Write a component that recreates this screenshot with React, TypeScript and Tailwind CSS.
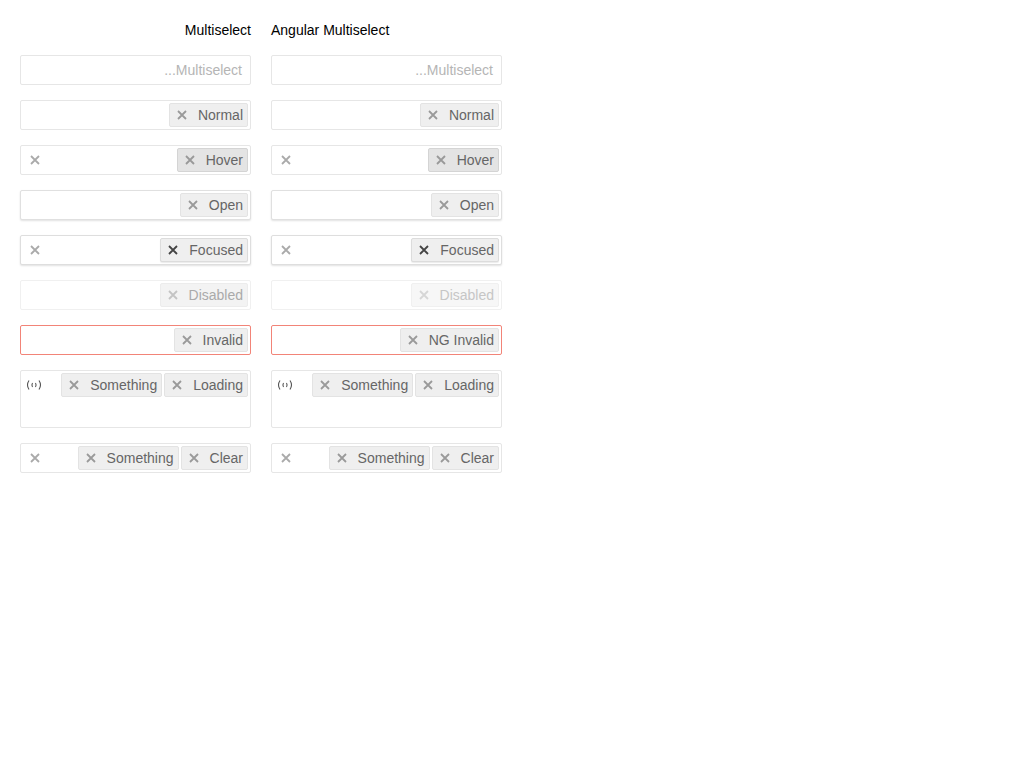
import React from "react";

type TagKind = "normal" | "hover" | "focused" | "disabled" | "disabledLight";
type BoxState = "normal" | "open" | "focused" | "disabled" | "invalid";

type Row = {
  tags: { label: string; kind?: TagKind }[];
  state?: BoxState;
  clear?: boolean;
  loading?: boolean;
  tall?: boolean;
  placeholder?: string;
};

const XIcon = ({ className }: { className: string }) => (
  <svg width="10" height="10" viewBox="0 0 10 10" className={`shrink-0 ${className}`}>
    <path d="M1 1L9 9M9 1L1 9" stroke="currentColor" strokeWidth="1.8" />
  </svg>
);

// little "((·))" spinner glyph
const LoadingIcon = () => (
  <svg width="18" height="12" viewBox="0 0 18 12" className="shrink-0 text-[#555]">
    <path d="M4 1.5Q1 6 4 10.5" stroke="currentColor" strokeWidth="1.1" fill="none" />
    <path d="M14 1.5Q17 6 14 10.5" stroke="currentColor" strokeWidth="1.1" fill="none" />
    <path d="M7.5 4Q6.3 6 7.5 8" stroke="currentColor" strokeWidth="1.1" fill="none" />
    <path d="M10.5 4Q11.7 6 10.5 8" stroke="currentColor" strokeWidth="1.1" fill="none" />
  </svg>
);

const tagStyles: Record<TagKind, { box: string; x: string; text: string }> = {
  normal: { box: "bg-[#efefef] border-[#e3e3e3]", x: "text-[#9a9a9a]", text: "text-[#666]" },
  hover: { box: "bg-[#e4e4e4] border-[#d4d4d4]", x: "text-[#999]", text: "text-[#666]" },
  focused: {
    box: "bg-[#efefef] border-[#dcdcdc] shadow-[0_1px_1px_rgba(0,0,0,0.08)]",
    x: "text-[#444]",
    text: "text-[#666]",
  },
  disabled: { box: "bg-[#f3f3f3] border-[#ececec]", x: "text-[#c4c4c4]", text: "text-[#aaa]" },
  disabledLight: { box: "bg-[#f7f7f7] border-[#f0f0f0]", x: "text-[#d6d6d6]", text: "text-[#c6c6c6]" },
};

const boxStyles: Record<BoxState, string> = {
  normal: "border-[#e6e6e6]",
  open: "border-[#e0e0e0] shadow-[0_1px_2px_rgba(0,0,0,0.12)]",
  focused: "border-[#dedede] shadow-[0_1px_2px_rgba(0,0,0,0.12)]",
  disabled: "border-[#f0f0f0]",
  invalid: "border-[#f28478]",
};

const Tag = ({ label, kind = "normal" }: { label: string; kind?: TagKind }) => {
  const s = tagStyles[kind];
  return (
    <div className={`flex h-[24px] items-center gap-[11px] rounded-[2px] border pl-[7px] pr-[4px] ${s.box}`}>
      <XIcon className={s.x} />
      <span className={`text-[14px] leading-none ${s.text}`}>{label}</span>
    </div>
  );
};

const Box = ({ row }: { row: Row }) => {
  const state = row.state ?? "normal";
  return (
    <div
      className={`flex items-start rounded-[2px] border bg-white p-[2px] ${
        row.tall ? "h-[58px]" : "h-[30px]"
      } ${boxStyles[state]}`}
    >
      {row.clear && (
        <div className="flex h-[24px] w-[20px] shrink-0 items-center pl-[7px]">
          <XIcon className="text-[#aaa]" />
        </div>
      )}
      {row.loading && (
        <div className="flex h-[24px] shrink-0 items-center pl-[2px]">
          <LoadingIcon />
        </div>
      )}
      <div className="flex flex-1 justify-end gap-[2px]">
        {row.placeholder ? (
          <span className="flex h-[24px] items-center pr-[6px] text-[14px] text-[#b5b5b5]">{row.placeholder}</span>
        ) : (
          row.tags.map((t) => <Tag key={t.label} label={t.label} kind={t.kind} />)
        )}
      </div>
    </div>
  );
};

const makeRows = (angular: boolean): Row[] => [
  { tags: [], placeholder: "...Multiselect" },
  { tags: [{ label: "Normal" }] },
  { tags: [{ label: "Hover", kind: "hover" }], clear: true },
  { tags: [{ label: "Open" }], state: "open" },
  { tags: [{ label: "Focused", kind: "focused" }], clear: true, state: "focused" },
  { tags: [{ label: "Disabled", kind: angular ? "disabledLight" : "disabled" }], state: "disabled" },
  { tags: [{ label: angular ? "NG Invalid" : "Invalid" }], state: "invalid" },
  { tags: [{ label: "Something" }, { label: "Loading" }], loading: true, tall: true },
  { tags: [{ label: "Something" }, { label: "Clear" }], clear: true },
];

export default function App() {
  return (
    <div className="min-h-screen bg-white px-[20px] pt-[20px] font-['Liberation_Sans',Arial,sans-serif]">
      <div className="grid w-[482px] grid-cols-2 gap-x-[20px]">
        <h3 className="mb-[15px] h-[20px] text-right text-[14px] leading-[20px] text-black">Multiselect</h3>
        <h3 className="mb-[15px] h-[20px] text-left text-[14px] leading-[20px] text-black">Angular Multiselect</h3>
        {[false, true].map((angular) => (
          <div key={String(angular)} className={`flex flex-col gap-[15px] ${angular ? "col-start-2 row-start-2" : "col-start-1 row-start-2"}`}>
            {makeRows(angular).map((row, i) => (
              <Box key={i} row={row} />
            ))}
          </div>
        ))}
      </div>
    </div>
  );
}
